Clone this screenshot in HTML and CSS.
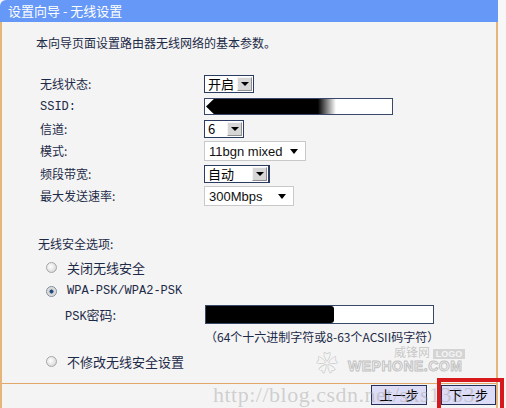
FILE: index.html
```html
<!DOCTYPE html>
<html lang="zh-CN">
<head>
  <meta charset="UTF-8">
  <title>设置向导 - 无线设置</title>
  <link rel="stylesheet" href="styles.css">
</head>
<body>
  <div class="wizard">
    <div class="wizard-head">设置向导&nbsp;-&nbsp;无线设置</div>
    <div class="wizard-main">
      <div class="wizard-body">
        <p class="intro">本向导页面设置路由器无线网络的基本参数。</p>

        <div class="form-grid">
          <div class="lbl">无线状态:</div>
          <div class="ctl">
            <span class="pick pick-old pick-state"><span class="pick-val">开启</span><span class="pick-btn"><i></i></span></span>
          </div>

          <div class="lbl mono">SSID:</div>
          <div class="ctl">
            <span class="field field-ssid"><span class="redact redact-ssid"></span></span>
          </div>

          <div class="lbl">信道:</div>
          <div class="ctl">
            <span class="pick pick-old pick-chan"><span class="pick-val">6</span><span class="pick-btn"><i></i></span></span>
          </div>

          <div class="lbl">模式:</div>
          <div class="ctl">
            <span class="pick pick-new pick-mode"><span class="pick-val">11bgn mixed</span><i></i></span>
          </div>

          <div class="lbl">频段带宽:</div>
          <div class="ctl">
            <span class="pick pick-old pick-band"><span class="pick-val">自动</span><span class="pick-btn"><i></i></span></span>
          </div>

          <div class="lbl">最大发送速率:</div>
          <div class="ctl">
            <span class="pick pick-new pick-rate"><span class="pick-val">300Mbps</span><i></i></span>
          </div>
        </div>

        <div class="sec-title">无线安全选项:</div>

        <div class="radio-row">
          <span class="radio"></span>
          <span>关闭无线安全</span>
        </div>
        <div class="radio-row">
          <span class="radio radio--on"></span>
          <span class="mono">WPA-PSK/WPA2-PSK</span>
        </div>
        <div class="psk-row">
          <span class="psk-lbl"><span class="mono">PSK</span>密码:</span>
          <span class="field field-psk"><span class="redact redact-psk"></span></span>
        </div>
        <div class="hint">（64个十六进制字符或8-63个ACSII码字符）</div>
        <div class="radio-row">
          <span class="radio"></span>
          <span>不修改无线安全设置</span>
        </div>
      </div>

      <div class="wizard-foot">
        <button class="btn" type="button">上一步</button>
        <button class="btn" type="button">下一步</button>
      </div>
    </div>

    <!-- watermarks and the red highlight lie over the page -->
    <div class="mark-logo">
      <span class="mark-paw">❀</span>
      <span class="mark-name">威锋网 <b>LOGO</b></span>
      <span class="mark-site">WEPHONE.COM</span>
    </div>
    <div class="mark-url">http://blog.csdn.net/sxs1333</div>
    <div class="highlight"></div>
  </div>
</body>
</html>
```

FILE: styles.css
```css
/* Page */
body {
  margin: 0;
  background: #f7f7f7;
  font-family: "Noto Sans CJK SC", "Noto Sans", sans-serif;
  font-size: 12px;
  color: #1c2a48;
}

.wizard {
  position: relative;
  width: 498px;
  height: 408px;
}

.wizard-head {
  height: 22px;
  line-height: 22px;
  padding-left: 8px;
  background: #6598f7;
  color: #fff;
  font-size: 13px;
  border-top-left-radius: 6px;
}

.wizard-main {
  border-left: 2px solid #e6b579;
  border-right: 2px solid #e6b579;
  background: #f4f4f4;
  height: 386px;
  box-sizing: border-box;
}

.wizard-body {
  height: 362px;
  box-sizing: border-box;
  padding: 13px 0 0 34px;
  border-bottom: 1px solid #e2a86a;
}

.intro {
  margin: 0;
  line-height: 16px;
  height: 16px;
}

.mono {
  font-family: "Liberation Mono", "DejaVu Sans Mono", monospace;
  font-size: 12px;
}

/* Form grid */
.form-grid {
  display: grid;
  grid-template-columns: 164px 1fr;
  grid-auto-rows: 22.4px;
  margin-top: 22px;
  padding-left: 4px;
  align-items: center;
}

.lbl {
  line-height: 16px;
}

.ctl {
  display: flex;
  align-items: center;
}

/* Old style select */
.pick {
  display: inline-flex;
  align-items: center;
  box-sizing: border-box;
  background: #fff;
}

.pick-old {
  height: 18px;
  border: 1px solid #2b3b62;
  font-size: 13px;
  color: #000;
}

.pick-old .pick-val {
  flex: 1;
  padding-left: 3px;
  line-height: 16px;
}

.pick-btn {
  width: 15px;
  height: 14px;
  margin-right: 1px;
  background: #d6d6d6;
  border: 1px solid #f4f4f4;
  border-right-color: #8f8f8f;
  border-bottom-color: #8f8f8f;
  box-sizing: border-box;
  display: flex;
  align-items: center;
  justify-content: center;
}

.pick-btn i,
.pick-new i {
  width: 0;
  height: 0;
  border-left: 4px solid transparent;
  border-right: 4px solid transparent;
  border-top: 4px solid #000;
}

.pick-state { width: 50px; }
.pick-chan { width: 40px; }
.pick-band { width: 66px; border-right-width: 2px; }

/* Newer select */
.pick-new {
  height: 20px;
  border: 1px solid #c9c9c9;
  font-family: "Liberation Sans", Arial, sans-serif;
  font-size: 13px;
  color: #111;
  padding: 0 7px 0 4px;
}

.pick-new .pick-val {
  flex: 1;
  white-space: nowrap;
}

.pick-new i {
  border-left-width: 4px;
  border-right-width: 4px;
  border-top-width: 5px;
}

.pick-mode { width: 102px; }
.pick-rate { width: 90px; }

/* Text fields with blacked out contents */
.field {
  display: inline-block;
  box-sizing: border-box;
  background: #fff;
  border: 1px solid #3a4868;
}

.field-ssid {
  width: 189px;
  height: 17px;
}

.field-psk {
  width: 229px;
  height: 19px;
}

.redact {
  display: block;
  height: 100%;
  background: linear-gradient(90deg, #000 0, #000 86%, rgba(0, 0, 0, 0) 100%);
}

.redact-ssid {
  width: 130px;
  margin-left: 1px;
  border-radius: 8px 0 0 8px;
  clip-path: polygon(0 50%, 6% 0, 100% 0, 100% 100%, 6% 100%);
}

.redact-psk {
  width: 128px;
  background: #000;
  border-radius: 0 3px 3px 0;
}

/* Security section */
.sec-title {
  margin-top: 29px;
  padding-left: 2px;
  line-height: 16px;
}

.radio-row {
  display: flex;
  align-items: center;
  gap: 10px;
  height: 24px;
  padding-left: 10px;
  font-size: 13px;
}

.sec-title + .radio-row {
  margin-top: 3px;
}

.radio {
  width: 11px;
  height: 11px;
  border-radius: 50%;
  border: 1px solid #a6a6a6;
  background: radial-gradient(circle at 40% 40%, #fff 0, #e2e2e2 60%, #c8c8c8 100%);
  box-sizing: border-box;
  display: inline-block;
}

.radio--on {
  background: radial-gradient(circle, #1e3d6e 0, #2b5690 28%, #d0d0d0 36%, #f2f2f2 100%);
  border-color: #7f8c9c;
}

.psk-row {
  display: flex;
  align-items: center;
  height: 22px;
  padding-left: 29px;
  font-size: 13px;
}

.psk-lbl {
  width: 140px;
}

.hint {
  padding-left: 169px;
  height: 24px;
  line-height: 24px;
  font-size: 12px;
}

/* Footer */
.wizard-foot {
  display: flex;
  justify-content: flex-end;
  align-items: flex-start;
  gap: 14px;
  padding-top: 1px;
  height: 23px;
  box-sizing: border-box;
}

.btn {
  width: 56px;
  height: 20px;
  padding: 0;
  border: 1px solid #22305a;
  background: #dcdcf6;
  font-family: "Noto Sans CJK SC", sans-serif;
  font-size: 13px;
  line-height: 18px;
  color: #000;
}

.btn:last-child {
  width: 55px;
}

/* Overlays */
.mark-url {
  position: absolute;
  left: 213px;
  top: 382px;
  font-family: "Liberation Serif", serif;
  font-size: 22px;
  color: rgba(160, 160, 160, 0.45);
  letter-spacing: 0.5px;
  white-space: nowrap;
  pointer-events: none;
}

.mark-logo {
  position: absolute;
  left: 316px;
  top: 343px;
  width: 160px;
  height: 32px;
  color: rgba(170, 170, 170, 0.6);
  pointer-events: none;
}

.mark-paw {
  position: absolute;
  left: 0;
  top: 2px;
  font-size: 22px;
}

.mark-name {
  position: absolute;
  left: 78px;
  top: 0;
  font-size: 12px;
}

.mark-name b {
  font-family: "Liberation Sans", sans-serif;
  font-size: 9px;
  padding: 0 3px;
  background: rgba(190, 190, 190, 0.6);
  color: #f4f4f4;
}

.mark-site {
  position: absolute;
  left: 32px;
  top: 15px;
  font-family: "Liberation Sans", sans-serif;
  font-size: 14px;
  font-weight: bold;
  letter-spacing: 0.5px;
  color: #f4f4f4;
  -webkit-text-stroke: 1px rgba(170, 170, 170, 0.7);
}

.highlight {
  position: absolute;
  left: 437px;
  top: 378px;
  width: 67px;
  height: 34px;
  border: 4px solid #d8191c;
  box-sizing: border-box;
  pointer-events: none;
}
```
